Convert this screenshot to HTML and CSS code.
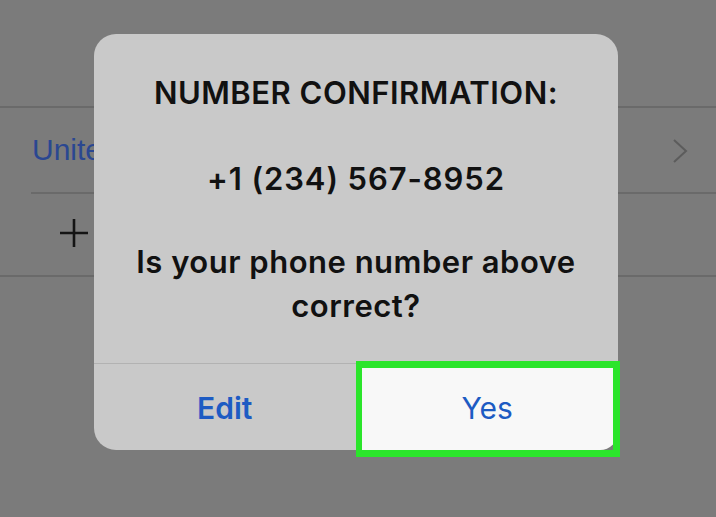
FILE: index.html
```html
<!DOCTYPE html>
<html lang="en">
<head>
<meta charset="utf-8">
<title>Number confirmation</title>
<link rel="stylesheet" href="styles.css">
</head>
<body>
<div class="screen">
  <div class="top"></div>
  <div class="list">
    <div class="row country">
      <span class="country-name">United States</span>
      <svg class="chev" width="16" height="24" viewBox="0 0 16 24"><polyline points="2,1 14,12 2,23" fill="none" stroke="#5c5c5c" stroke-width="2"/></svg>
    </div>
    <div class="row add">
      <svg class="plus" width="30" height="30" viewBox="0 0 30 30"><path d="M15 1 V29 M1 15 H29" stroke="#141414" stroke-width="2.6" fill="none"/></svg>
    </div>
  </div>
  <div class="dialog">
    <div class="message">
      <p class="title">NUMBER CONFIRMATION:</p>
      <p class="phone">+1 (234) 567-8952</p>
      <p class="question">Is your phone number above correct?</p>
    </div>
    <div class="actions">
      <div class="btn edit">Edit</div>
      <div class="btn yes">Yes</div>
    </div>
  </div>
</div>
</body>
</html>
```

FILE: styles.css
```css
html, body {
  margin: 0;
  padding: 0;
}
body {
  background: #7b7b7b;
  font-family: "Liberation Sans", Arial, sans-serif;
  width: 716px;
  height: 517px;
  overflow: hidden;
}
.screen {
  position: relative;
  width: 716px;
  height: 517px;
}
.top {
  height: 106px;
}
.list {
  border-top: 2px solid #6a6a6a;
  border-bottom: 2px solid #6a6a6a;
}
.row {
  display: flex;
  align-items: center;
}
.country {
  height: 84px;
  margin-left: 31px;
  padding-right: 28px;
  border-bottom: 2px solid #6a6a6a;
  justify-content: space-between;
}
.country-name {
  font-size: 30px;
  line-height: 44px;
  color: #2a4791;
  padding-left: 1px;
}
.chev {
  display: block;
  margin-top: 2px;
}
.add {
  height: 81px;
  padding-left: 59px;
}
.plus {
  display: block;
  margin-top: -4px;
}
.dialog {
  position: absolute;
  left: 94px;
  top: 34px;
  width: 524px;
  height: 416px;
  background: #c9c9c9;
  border-radius: 22px;
  display: flex;
  flex-direction: column;
}
.message {
  padding: 37px 16px 35px;
  text-align: center;
  color: #111;
}
.message p {
  margin: 0;
  font-family: Inter, "Liberation Sans", Arial, sans-serif;
  font-size: 31px;
  line-height: 44px;
  font-weight: 600;
  letter-spacing: 0.5px;
}
.phone {
  margin-top: 42px !important;
  letter-spacing: 0.9px !important;
}
.question {
  margin-top: 39px !important;
}
.actions {
  flex: 1;
  display: flex;
  border-top: 1px solid #b2b2b2;
}
.btn {
  flex: 1;
  display: flex;
  align-items: center;
  justify-content: center;
  font-family: Inter, "Liberation Sans", Arial, sans-serif;
  font-size: 30px;
  line-height: 44px;
  color: #1d5bc3;
  padding-top: 2px;
}
.edit {
  font-weight: 600;
  border-right: 1px solid #b2b2b2;
  border-bottom-left-radius: 22px;
}
.yes {
  position: relative;
  background: #f8f8f8;
  border-bottom-right-radius: 18px;
}
.yes::after {
  content: "";
  position: absolute;
  left: -1px;
  top: -3px;
  right: -2px;
  bottom: -7px;
  border: 7px solid #2be52b;
  border-left-width: 6px;
}
```
